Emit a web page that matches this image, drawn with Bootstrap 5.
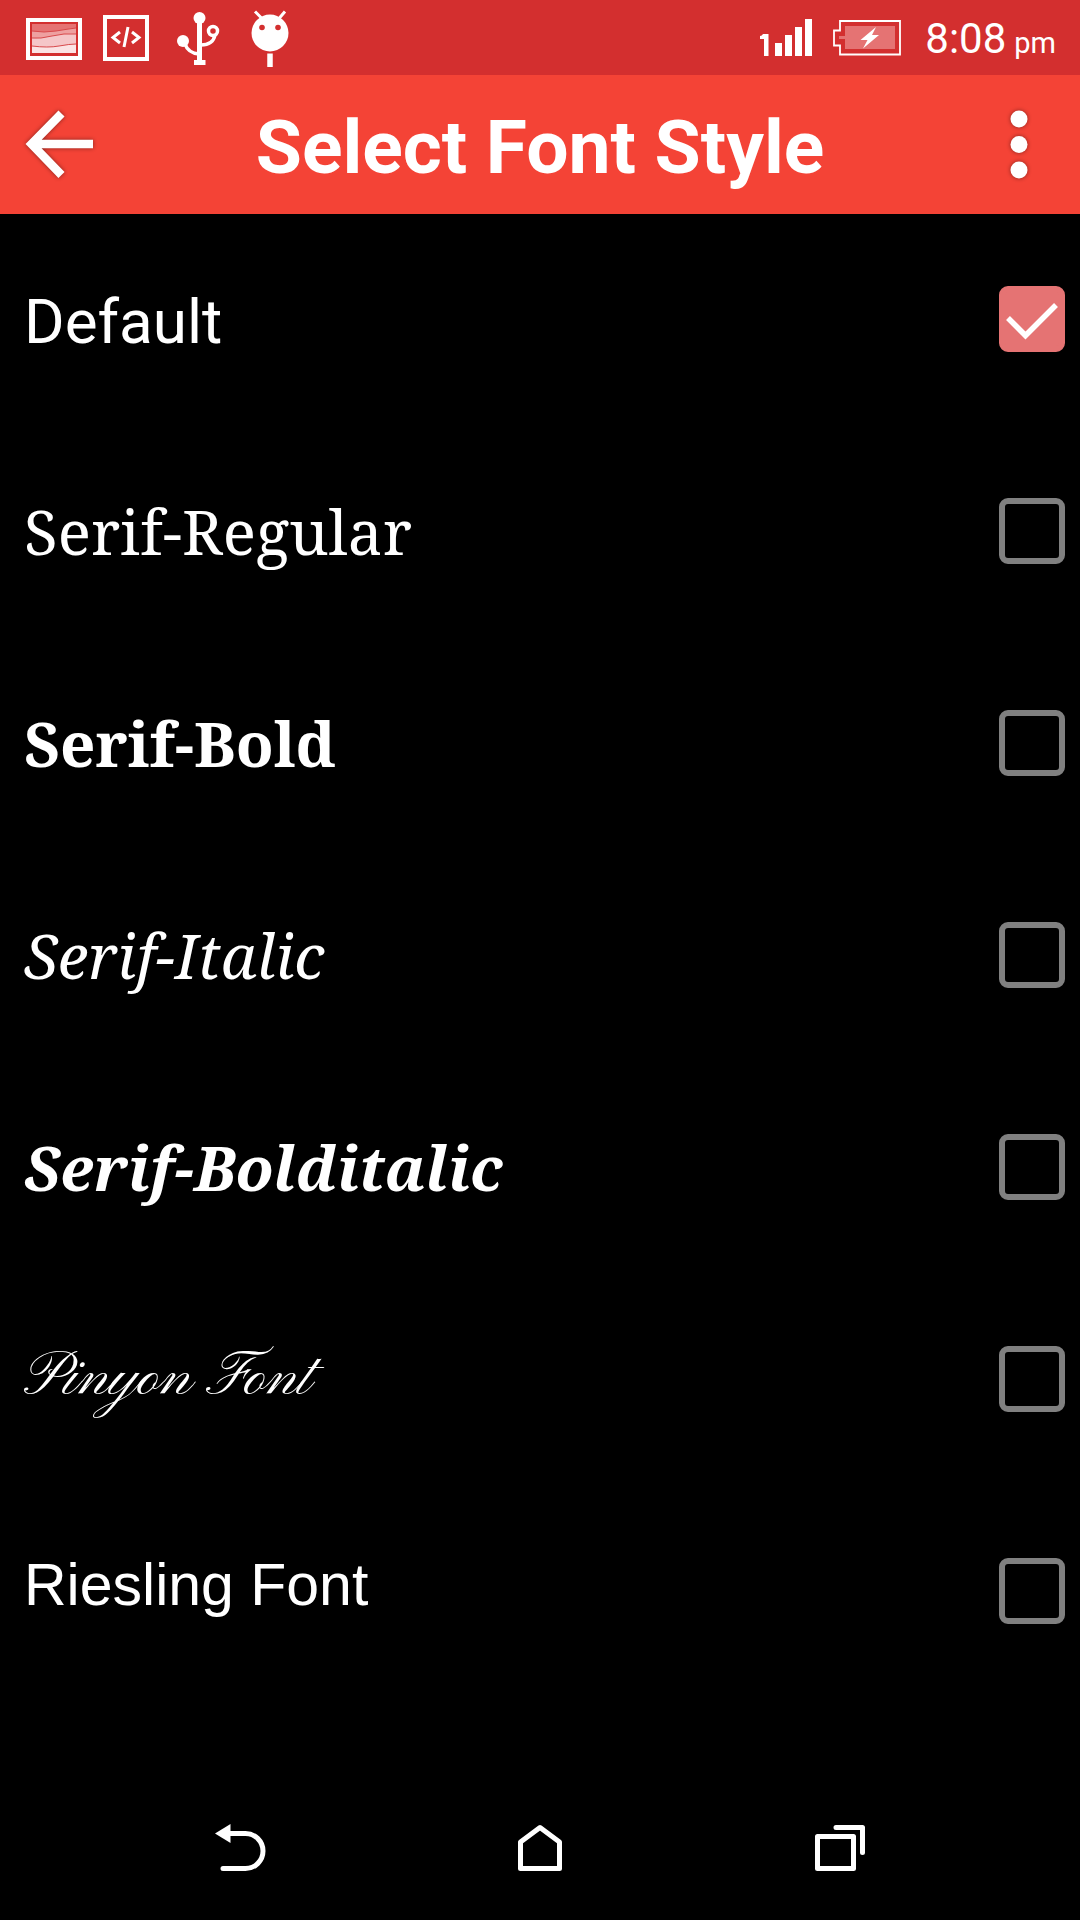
<!DOCTYPE html>
<html lang="en">
<head>
<meta charset="utf-8">
<meta name="viewport" content="width=device-width, initial-scale=1">
<title>Select Font Style</title>
<link href="https://cdn.jsdelivr.net/npm/bootstrap@5.3.0/dist/css/bootstrap.min.css" rel="stylesheet">
<style>
body { background: #000; color: #fff; font-family: Roboto, sans-serif; }
.status-strip { background: #d32f2f; height: 75px; padding: 0 24px; }
.status-icons { gap: 14px; }
.status-info { gap: 19px; }
.clock-box { padding-top: 6px; }
.clock-time { font-size: 42px; line-height: 48px; }
.clock-ampm { font-size: 29px; }
.app-header { background: #f44336; height: 139px; padding-bottom: 2px; }
.app-header .btn { width: 120px; height: 120px; }
.app-title { font-size: 75px; line-height: 88px; font-weight: 700; padding-top: 6px; }
.icon-shadow { filter: drop-shadow(0 0 2px rgba(0, 0, 0, .45)); }
.font-row { height: 212px; padding: 0 15px 2px 24px; }
.font-row label { font-size: 62px; line-height: 72px; }
.font-row .form-check-input { width: 66px; height: 66px; border: 6px solid #808080; border-radius: 9px; background-color: transparent; }
.font-row .form-check-input:checked { border-color: #e57373; background-color: #e57373; background-origin: border-box; background-size: 66px 66px;
  background-image: url("data:image/svg+xml,%3Csvg xmlns='http://www.w3.org/2000/svg' viewBox='0 0 66 66'%3E%3Cpath d='M9 32L26.500 49.500L57 19' fill='none' stroke='%23fff' stroke-width='5.500'/%3E%3C/svg%3E"); }
.font-row .face-default { padding-top: 6px; }
.font-row .face-serif { font-family: "Noto Serif", "Droid Serif", "DejaVu Serif Condensed", "DejaVu Serif", serif; }
.font-row .face-script { font-family: "Pinyon Script", "Liberation Serif", serif; }
.font-row .face-riesling { font-family: "Liberation Sans", sans-serif; font-size: 59px; padding-bottom: 12px; }
.nav-strip { height: 144px; }
.nav-strip .btn { width: 300px; }
</style>
<script src="https://cdn.jsdelivr.net/npm/bootstrap@5.3.0/dist/js/bootstrap.bundle.min.js"></script>
</head>
<body class="d-flex flex-column min-vh-100">

<div class="status-strip d-flex justify-content-between align-items-center">
  <div class="status-icons d-flex">
    <svg width="60" height="75" viewBox="24 0 60 75" aria-hidden="true">
      <rect x="28" y="20" width="52" height="38" fill="none" stroke="#fff" stroke-width="4"/>
      <rect x="32" y="24" width="44" height="29" fill="#e57373"/>
      <path d="M32 31q12 2 24 0t20-3v25H32z" fill="#eea0a0"/>
      <path d="M32 38q8 1 20-2t24-2v19H32z" fill="#f5c6c8"/>
      <path d="M32 46q16 2 27 0t17-2v9H32z" fill="#fbe3e4"/>
      <path d="M32 31q12 2 24 0t20-3M32 38q8 1 20-2t24-2M32 46q16 2 27 0t17-2" fill="none" stroke="#d8494b"/>
    </svg>
    <svg width="56" height="75" viewBox="98 0 56 75" aria-hidden="true" fill="none" stroke="#fff">
      <rect x="105" y="17" width="42" height="42" stroke-width="4"/>
      <path d="M120 32l-7 5.500 7 5.500M132 32l7 5.500-7 5.500M128 27l-4 20" stroke-width="3"/>
    </svg>
    <svg width="60" height="75" viewBox="168 0 60 75" aria-hidden="true" fill="none" stroke="#fff" stroke-width="3.500">
      <path d="M199.500 18v44" stroke-width="5"/>
      <path d="M194 62.500h11.500" stroke-width="5"/>
      <circle cx="199.500" cy="18" r="6" fill="#fff" stroke="none"/>
      <circle cx="183" cy="41" r="6" fill="#fff" stroke="none"/>
      <path d="M185 44q3 9 14 10M201 45q12 0 14-10"/>
      <circle cx="213" cy="31" r="4.500"/>
    </svg>
    <svg width="56" height="75" viewBox="242 0 56 75" aria-hidden="true">
      <circle cx="270" cy="33" r="18.500" fill="#fff"/>
      <path d="M255 11.500l7 7M285 11.500l-6 7" stroke="#fff" stroke-width="3"/>
      <circle cx="262" cy="27.500" r="2.800" fill="#d32f2f"/>
      <circle cx="278" cy="27.500" r="2.800" fill="#d32f2f"/>
      <path d="M270 53.500v13.500" stroke="#fff" stroke-width="5.500"/>
    </svg>
  </div>
  <div class="status-info d-flex align-items-center">
    <svg width="56" height="75" viewBox="757 0 56 75" aria-hidden="true" fill="#fff">
      <path d="M763 34h5.500v22H764V39h-4v-3q2 0 3-2z"/>
      <path d="M775 43h7v13h-7zM785 35h7v21h-7zM795 27h7v29h-7zM805 19h7v37h-7z"/>
    </svg>
    <svg width="70" height="75" viewBox="832 0 70 75" aria-hidden="true">
      <path d="M840 21h60v33.500h-60v-9h-6v-15h6z" fill="none" stroke="#fff" stroke-width="1.800"/>
      <path d="M845 26h50v23h-50v-10h-6v-3h6z" fill="#e57373"/>
      <path d="M876 27l-15.500 13h7l-4.500 8.500 16-13.500h-7z" fill="#fff"/>
    </svg>
    <div class="clock-box d-flex align-items-baseline gap-2 ms-1">
      <span class="clock-time">8:08</span><span class="clock-ampm">pm</span>
    </div>
  </div>
</div>

<header class="app-header d-flex align-items-center">
  <button type="button" class="btn p-0 border-0" aria-label="Back">
    <svg class="icon-shadow" width="72" height="72" viewBox="24 107 72 72" fill="none" stroke="#fff" stroke-width="8.500"><path d="M61.500 112.500L31.500 143l30 31M33 143h60"/></svg>
  </button>
  <h1 class="app-title flex-grow-1 text-center m-0">Select Font Style</h1>
  <button type="button" class="btn p-0 border-0" aria-label="More options">
    <svg class="icon-shadow" width="24" height="72" viewBox="1007 107 24 72" fill="#fff"><circle cx="1018" cy="118" r="8.500"/><circle cx="1018" cy="143.500" r="8.500"/><circle cx="1018" cy="169" r="8.500"/></svg>
  </button>
</header>

<main class="flex-grow-1">
  <div class="font-row d-flex align-items-center justify-content-between">
    <label for="f1" class="face-default">Default</label><input class="form-check-input m-0" type="checkbox" id="f1" checked>
  </div>
  <div class="font-row d-flex align-items-center justify-content-between">
    <label for="f2" class="face-serif">Serif-Regular</label><input class="form-check-input m-0" type="checkbox" id="f2">
  </div>
  <div class="font-row d-flex align-items-center justify-content-between">
    <label for="f3" class="face-serif fw-bold">Serif-Bold</label><input class="form-check-input m-0" type="checkbox" id="f3">
  </div>
  <div class="font-row d-flex align-items-center justify-content-between">
    <label for="f4" class="face-serif fst-italic">Serif-Italic</label><input class="form-check-input m-0" type="checkbox" id="f4">
  </div>
  <div class="font-row d-flex align-items-center justify-content-between">
    <label for="f5" class="face-serif fw-bold fst-italic">Serif-Bolditalic</label><input class="form-check-input m-0" type="checkbox" id="f5">
  </div>
  <div class="font-row d-flex align-items-center justify-content-between">
    <label for="f6" class="face-script">Pinyon Font</label><input class="form-check-input m-0" type="checkbox" id="f6">
  </div>
  <div class="font-row d-flex align-items-center justify-content-between">
    <label for="f7" class="face-riesling">Riesling Font</label><input class="form-check-input m-0" type="checkbox" id="f7">
  </div>
</main>

<nav class="nav-strip d-flex justify-content-center align-items-center" aria-label="System">
  <button type="button" class="btn p-0 border-0" aria-label="Back">
    <svg width="54" height="50" viewBox="213 1823 54 50" fill="none" stroke="#fff" stroke-width="5" stroke-linecap="round"><path d="M228 1833.500h17.500a17.500 17.500 0 0 1 0 35H223"/><path d="M215 1833.500l15.500-9.500v19z" fill="#fff" stroke="none"/></svg>
  </button>
  <button type="button" class="btn p-0 border-0" aria-label="Home">
    <svg width="50" height="50" viewBox="515 1823 50 50" fill="none" stroke="#fff" stroke-width="5" stroke-linejoin="round"><path d="M520.500 1868.500v-26.500l19.500-14.500 19.500 14.500v26.500z"/></svg>
  </button>
  <button type="button" class="btn p-0 border-0" aria-label="Recent apps">
    <svg width="54" height="50" viewBox="813 1823 54 50" fill="none" stroke="#fff" stroke-width="5" stroke-linejoin="round" stroke-linecap="round"><path d="M817.500 1836.500h36v32h-36zM836 1827.500h26.500v25"/></svg>
  </button>
</nav>
</body>
</html>
